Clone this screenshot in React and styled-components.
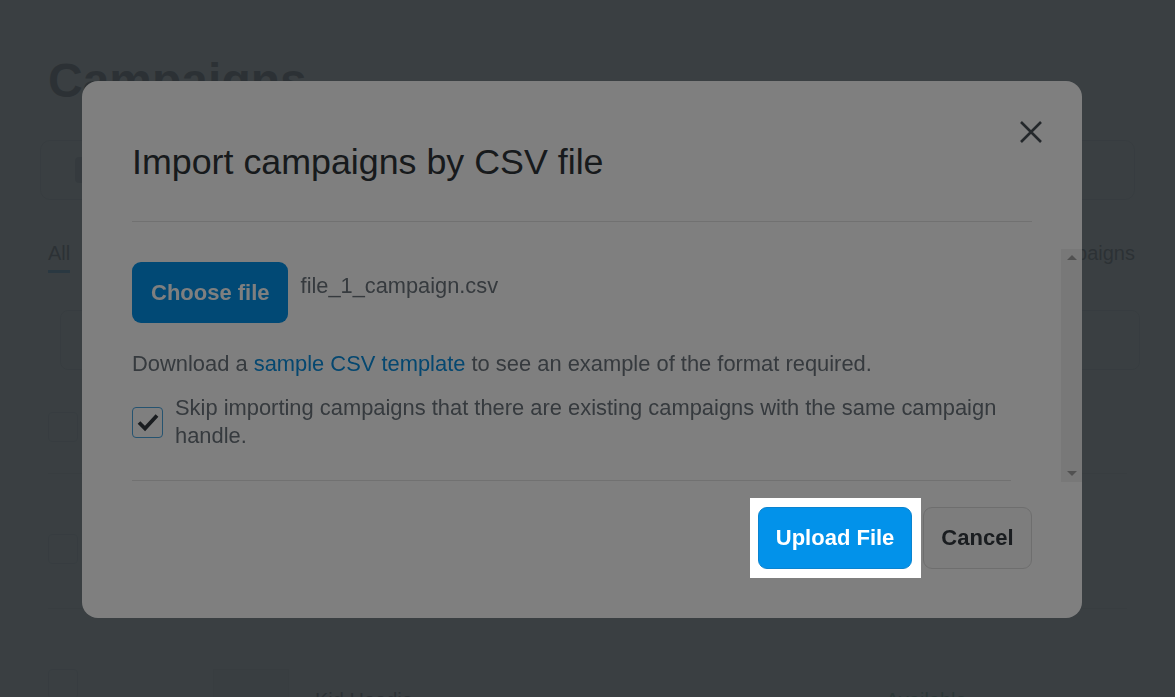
import React from 'react'
import styled, { createGlobalStyle } from 'styled-components'

const Global = createGlobalStyle`
  html, body { margin: 0; padding: 0; background: #fff; }
  body { font-family: "Liberation Sans", Arial, Helvetica, sans-serif; color: #212529; }
  * { box-sizing: border-box; }
`

export default function App() {
  return (
    <>
      <Global />
      <Page>
        <PageTitle>Campaigns</PageTitle>
        <FilterCard>
          <SelectBox />
        </FilterCard>
        <Tabs>
          <Tab active>All</Tab>
          <TabLink>Archived campaigns</TabLink>
        </Tabs>
        <SearchBar />
        <Table>
          <Row head>
            <RowCheck />
          </Row>
          <Row>
            <RowCheck />
          </Row>
          <Row>
            <RowCheck />
            <Thumb />
            <ProductName>Kid Hoodie</ProductName>
            <Status>Available</Status>
          </Row>
        </Table>
      </Page>

      <Backdrop>
        <Modal>
          <ModalHeader>
            <ModalTitle>Import campaigns by CSV file</ModalTitle>
            <CloseButton aria-label="Close">
              <svg width="24" height="22" viewBox="0 0 24 22">
                <path d="M2 1 L22 21 M22 1 L2 21" stroke="currentColor" strokeWidth="2.6" fill="none" />
              </svg>
            </CloseButton>
          </ModalHeader>

          <ModalBody>
            <BodyContent>
              <FileRow>
                <ChooseButton>Choose file</ChooseButton>
                <FileName>file_1_campaign.csv</FileName>
              </FileRow>
              <Hint>
                Download a <Link href="#">sample CSV template</Link> to see an example of the format required.
              </Hint>
              <CheckRow>
                <CheckBox>
                  <svg width="24" height="22" viewBox="0 0 24 22">
                    <path d="M3 11.5 L9 17.5 L21 4.5" stroke="#343a40" strokeWidth="3.8" fill="none" strokeLinecap="butt" />
                  </svg>
                </CheckBox>
                <CheckLabel>
                  Skip importing campaigns that there are existing campaigns with the same campaign handle.
                </CheckLabel>
              </CheckRow>
              <Divider />
            </BodyContent>
            <ScrollTrack>
              <Arrow />
              <Arrow down />
            </ScrollTrack>
          </ModalBody>

          <ModalFooter>
            <Spotlight>
              <PrimaryButton>Upload File</PrimaryButton>
            </Spotlight>
            <CancelButton>Cancel</CancelButton>
          </ModalFooter>
        </Modal>
      </Backdrop>
    </>
  )
}

/* background page */
const Page = styled.div`
  padding: 52px 48px 0;
  height: 697px;
  overflow: hidden;
`
const PageTitle = styled.h1`
  margin: 0;
  font-size: 48px;
  line-height: 1.2;
  font-weight: 700;
  color: #212529;
`
const FilterCard = styled.div`
  margin: 30px -8px 0 -8px;
  height: 60px;
  border: 1px solid #ced4da;
  border-radius: 10px;
  display: flex;
  align-items: center;
  padding-left: 34px;
`
const SelectBox = styled.div`
  width: 160px;
  height: 26px;
  border-radius: 4px;
  background: #adb5bd;
`
const Tabs = styled.div`
  margin: 40px -8px 0 0;
  display: flex;
  justify-content: space-between;
  align-items: flex-start;
`
const Tab = styled.div`
  font-size: 20px;
  line-height: 26px;
  padding-bottom: 4px;
  color: #212529;
  border-bottom: 3px solid ${p => (p.active ? '#0292ea' : 'transparent')};
`
const TabLink = styled.div`
  font-size: 20px;
  line-height: 26px;
  color: #212529;
`
const SearchBar = styled.div`
  margin: 37px -13px 0 12px;
  height: 60px;
  border: 1px solid #ced4da;
  border-radius: 8px;
`
const Table = styled.div`
  margin-top: 26px;
`
const Row = styled.div`
  display: flex;
  align-items: flex-start;
  height: ${p => (p.head ? '78px' : '135px')};
  padding-top: ${p => (p.head ? '16px' : '60px')};
  border-bottom: 1px solid #dee2e6;
`
const RowCheck = styled.div`
  width: 30px;
  height: 30px;
  border: 1px solid #ced4da;
  border-radius: 4px;
`
const Thumb = styled.div`
  width: 76px;
  height: 76px;
  margin-left: 135px;
  border: 1px solid #dee2e6;
  background: #f1f3f5;
`
const ProductName = styled.div`
  margin: 20px 0 0 26px;
  font-size: 20px;
  color: #212529;
`
const Status = styled.div`
  margin: 20px 0 0 473px;
  font-size: 20px;
  color: #198754;
`

/* modal */
const Backdrop = styled.div`
  position: fixed;
  inset: 0;
  z-index: 10;
  background: rgba(97, 108, 115, 0.88);
  display: flex;
  justify-content: center;
  align-items: flex-start;
  padding: 81px 11px 0 0;
`
const Modal = styled.div`
  width: 1000px;
  background: #fff;
  border-radius: 16px;
`
const ModalHeader = styled.div`
  margin: 0 50px;
  padding-top: 40px;
  padding-bottom: 40px;
  border-bottom: 1px solid #e2e2e2;
  display: flex;
  justify-content: space-between;
  align-items: flex-start;
`
const ModalTitle = styled.h2`
  margin: 22px 0 0;
  font-size: 35.8px;
  line-height: 38px;
  font-weight: 400;
  color: #2f3438;
`
const CloseButton = styled.button`
  margin-right: -11px;
  padding: 0;
  border: 0;
  background: none;
  color: #495057;
  display: flex;
  cursor: pointer;
`
const ModalBody = styled.div`
  margin-top: 27px;
  display: flex;
`
const BodyContent = styled.div`
  flex: 1;
  padding: 13px 50px 1px 50px;
`
const FileRow = styled.div`
  display: flex;
  align-items: flex-start;
  gap: 13px;
`
const ChooseButton = styled.button`
  font-family: inherit;
  font-size: 22px;
  font-weight: 700;
  line-height: 27px;
  padding: 17px 18px 17px 19px;
  border: 0;
  border-radius: 9px;
  background: #0292ea;
  color: #fff;
`
const FileName = styled.span`
  margin-top: 9px;
  font-size: 21.8px;
  line-height: 30px;
  color: #6c757d;
`
const Hint = styled.p`
  margin: 26px 0 0;
  font-size: 21.9px;
  line-height: 30px;
  color: #6c757d;
`
const Link = styled.a`
  color: #0a8fe0;
  text-decoration: none;
`
const CheckRow = styled.label`
  margin-top: 15px;
  display: flex;
  align-items: center;
  gap: 12px;
`
const CheckBox = styled.span`
  flex: none;
  width: 31px;
  height: 31px;
  border: 1px solid #4aa6e0;
  border-radius: 4px;
  display: flex;
  align-items: center;
  justify-content: center;
`
const CheckLabel = styled.span`
  font-size: 21.9px;
  line-height: 28px;
  color: #6c757d;
`
const Divider = styled.hr`
  margin: 30px 0 0;
  border: 0;
  border-top: 1px solid #e2e2e2;
`
const ScrollTrack = styled.div`
  width: 21px;
  background: #f1f1f1;
  display: flex;
  flex-direction: column;
  justify-content: space-between;
  align-items: center;
  padding: 6px 0;
`
const Arrow = styled.span`
  width: 0;
  height: 0;
  border-left: 5px solid transparent;
  border-right: 5px solid transparent;
  ${p => (p.down ? 'border-top: 5px solid #a3a3a3;' : 'border-bottom: 5px solid #a3a3a3;')}
`
const ModalFooter = styled.div`
  padding: 25px 50px 49px;
  display: flex;
  justify-content: flex-end;
  align-items: center;
  gap: 11px;
`
const Spotlight = styled.span`
  position: relative;
  z-index: 1;
  display: inline-flex;
  margin: -9px -9px -9px -8px;
  padding: 9px 9px 9px 8px;
  background: #fff;
  box-shadow: 0 0 0 3000px rgba(0, 0, 0, 0.5);
`
const PrimaryButton = styled.button`
  font-family: inherit;
  font-size: 22px;
  font-weight: 700;
  line-height: 26px;
  padding: 17px 16.5px;
  border: 1px solid #0a83cf;
  border-radius: 9px;
  background: #0292ea;
  color: #fff;
  cursor: pointer;
`
const CancelButton = styled.button`
  font-family: inherit;
  font-size: 22px;
  font-weight: 700;
  line-height: 26px;
  padding: 17px 17.5px;
  border: 1px solid #dcdcdc;
  border-radius: 9px;
  background: #fafafa;
  color: #343a40;
  cursor: pointer;
`
